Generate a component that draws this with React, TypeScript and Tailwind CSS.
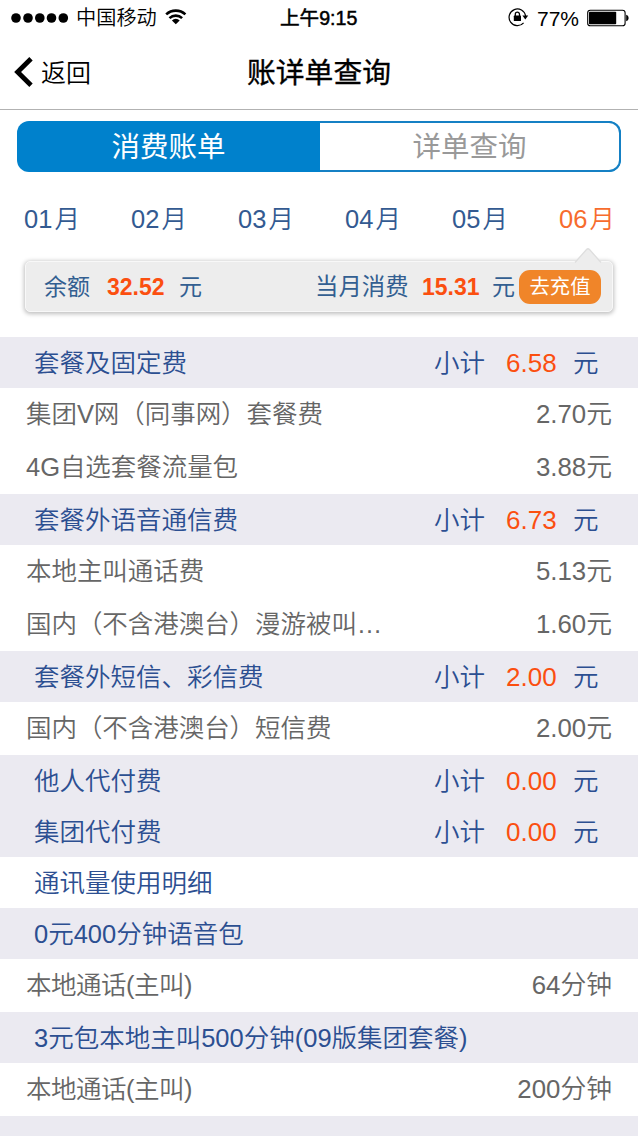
import React from "react";

type Row =
  | { kind: "group"; label: string; subtotal?: string; plain?: boolean }
  | { kind: "item"; label: string; value: string; tight?: boolean };

const rows: Row[] = [
  { kind: "group", label: "套餐及固定费", subtotal: "6.58" },
  { kind: "item", label: "集团V网（同事网）套餐费", value: "2.70元" },
  { kind: "item", label: "4G自选套餐流量包", value: "3.88元" },
  { kind: "group", label: "套餐外语音通信费", subtotal: "6.73" },
  { kind: "item", label: "本地主叫通话费", value: "5.13元" },
  { kind: "item", label: "国内（不含港澳台）漫游被叫…", value: "1.60元" },
  { kind: "group", label: "套餐外短信、彩信费", subtotal: "2.00" },
  { kind: "item", label: "国内（不含港澳台）短信费", value: "2.00元" },
  { kind: "group", label: "他人代付费", subtotal: "0.00" },
  { kind: "group", label: "集团代付费", subtotal: "0.00" },
  { kind: "group", label: "通讯量使用明细", plain: true },
  { kind: "group", label: "0元400分钟语音包" },
  { kind: "item", label: "本地通话(主叫)", value: "64分钟", tight: true },
  { kind: "group", label: "3元包本地主叫500分钟(09版集团套餐)" },
  { kind: "item", label: "本地通话(主叫)", value: "200分钟", tight: true },
];

const months = ["01", "02", "03", "04", "05", "06"];

function StatusBar() {
  return (
    <div className="flex h-9 shrink-0 items-center pl-[11px] pr-[9px] text-black">
      <div className="flex w-[269px] items-center">
        <svg width="58" height="10" viewBox="0 0 58 10">
          {[5, 17, 28.8, 40.5, 52.3].map((x) => (
            <circle key={x} cx={x} cy="5" r="4.8" />
          ))}
        </svg>
        <span className="ml-[7px] text-[20.2px] font-[350] leading-none">中国移动</span>
        <svg className="-mt-[2px] ml-[8px]" width="22" height="17" viewBox="0 0 22 17">
          <g fill="none" stroke="black" strokeWidth="2.6">
            <path d="M1.2 6.4a14 14 0 0 1 19.2 0" />
            <path d="M4.5 10.1a9.3 9.3 0 0 1 12.6 0" />
          </g>
          <path d="M10.8 16.2 6.9 12.4a5.6 5.6 0 0 1 7.8 0z" />
        </svg>
      </div>
      <div className="flex-1 whitespace-nowrap pt-[1px] text-[19.6px] leading-none [-webkit-text-stroke:0.5px_black]">
        上午9:15
      </div>
      <svg width="22" height="20" viewBox="0 0 22 20" className="-mt-[2px]">
        <path d="M15.6 15.8A8.3 8.3 0 1 1 17.6 9" fill="none" stroke="black" strokeWidth="1.2" />
        <path d="M14.4 8.6h5.8l-2.9 3.8z" />
        <rect x="5.8" y="8.6" width="7.2" height="5.4" rx=".6" />
        <path d="M7.3 9V7.2a2.1 2.1 0 0 1 4.2 0V9" fill="none" stroke="black" strokeWidth="1.3" />
      </svg>
      <span className="ml-[7px] w-[44px] whitespace-nowrap text-[21px] leading-none">77%</span>
      <svg className="-mt-[1px] ml-[6px]" width="42" height="18" viewBox="0 0 42 18">
        <rect x="0.7" y="1.2" width="37.4" height="15.6" rx="2.6" fill="none" stroke="black" strokeWidth="1.1" />
        <rect x="2" y="2.8" width="27.2" height="12.4" rx=".8" />
        <path d="M39.2 5.8c3.2.8 3.2 5.6 0 6.4z" />
      </svg>
    </div>
  );
}

function Header() {
  return (
    <header className="flex h-[74px] shrink-0 items-center border-b border-[#b2b2b2] pl-[14px] text-black">
      <svg className="-mt-[2px]" width="20" height="32" viewBox="0 0 20 32">
        <path d="M17 2.8 3.6 16 17 29.2" fill="none" stroke="black" strokeWidth="4.8" />
      </svg>
      <span className="ml-[7px] w-[206px] pt-[1px] text-[25px] font-[350] leading-none">返回</span>
      <h1 className="pt-[1px] text-[28.8px] leading-none [-webkit-text-stroke:0.35px_black]">账详单查询</h1>
    </header>
  );
}

function Segments() {
  return (
    <div className="mx-[17px] mt-[11px] flex h-[51px] shrink-0 overflow-hidden rounded-[12px] bg-[#0081cc] text-[28.5px] leading-[51px]">
      <div className="w-[303px] pt-[1px] text-center text-white">消费账单</div>
      <div className="flex-1 rounded-r-[12px] border-y-2 border-r-2 border-[#1580c4] bg-white text-center leading-[49px] text-[#999]">
        详单查询
      </div>
    </div>
  );
}

function Months() {
  return (
    <div className="flex h-[75px] shrink-0 pl-[24px] pt-[31px]">
      {months.map((m) => (
        <div
          key={m}
          className={
            m === "06"
              ? "flex w-[107px] shrink-0 gap-[2px] whitespace-nowrap text-[25.5px] font-[350] leading-[32px] text-[#f76c2d]"
              : "flex w-[107px] shrink-0 gap-[2px] whitespace-nowrap text-[25.5px] font-[350] leading-[32px] text-[#335a91]"
          }
        >
          <span>{m}</span>
          <span>月</span>
        </div>
      ))}
    </div>
  );
}

function Balance() {
  return (
    <div className="relative mx-[25px] mt-[14px] flex h-[51px] shrink-0 items-center rounded-[5px] border border-[#f8f8f8] bg-[#ededed] pl-[18px] text-[23px] leading-none text-[#335f91] shadow-[0_1px_4px_1px_rgba(0,0,0,0.25)]">
      <svg className="absolute -top-[15px] left-[546px]" width="32" height="16" viewBox="0 0 32 16">
        <path d="M3 15.5 14.5 2.5q1.5-1.5 3 0L29 15.5" fill="#ededed" stroke="#dedede" strokeWidth="1.3" />
      </svg>
      <span className="w-[63px] pt-[2px]">余额</span>
      <span className="w-[72px] pt-[1px] font-bold text-[#fb4f10]">32.52</span>
      <span className="w-[136px] pt-[2px]">元</span>
      <span className="w-[107px] whitespace-nowrap pt-[2px] text-[23.4px]">当月消费</span>
      <span className="w-[70px] pt-[1px] font-bold text-[#fb4f10]">15.31</span>
      <span className="w-[27px] pt-[2px]">元</span>
      <button className="h-[34px] w-[82px] rounded-[11px] bg-[#f08529] pt-[2px] text-[20.3px] leading-none text-white">
        去充值
      </button>
    </div>
  );
}

function BillRow({ row }: { row: Row }) {
  if (row.kind === "item") {
    return (
      <div className="flex h-[53px] shrink-0 items-center justify-between px-[26px] pt-[1px] text-[#666]">
        <span className={row.tight ? "tracking-[-0.5px]" : "tracking-[-0.05px]"}>{row.label}</span>
        <span className="text-[25.8px]">{row.value}</span>
      </div>
    );
  }
  return (
    <div
      className={
        row.plain
          ? "flex h-[51px] shrink-0 items-center bg-white pl-[34px] text-[#2c4f91]"
          : "flex h-[51px] shrink-0 items-center bg-[#ebeaf1] pl-[34px] text-[#2c4f91]"
      }
    >
      <span className="flex-1 pt-[2px]">{row.label}</span>
      {row.subtotal && (
        <>
          <span className="w-[72px] pt-[2px]">小计</span>
          <span className="w-[67px] pt-[1px] text-[26px] text-[#fb4f10]">{row.subtotal}</span>
          <span className="w-[65px] pt-[2px]">元</span>
        </>
      )}
    </div>
  );
}

export default function App() {
  return (
    <div className="flex h-[1136px] w-[638px] flex-col overflow-hidden bg-white font-['Liberation_Sans','Noto_Sans_CJK_SC',sans-serif]">
      <StatusBar />
      <Header />
      <Segments />
      <Months />
      <Balance />
      <main className="mt-[25px] flex min-h-0 flex-1 flex-col overflow-hidden whitespace-nowrap text-[25.5px] font-[350] leading-none">
        {rows.map((row, i) => (
          <BillRow key={i} row={row} />
        ))}
        <div className="flex-1 bg-[#ebeaf1]" />
      </main>
    </div>
  );
}
